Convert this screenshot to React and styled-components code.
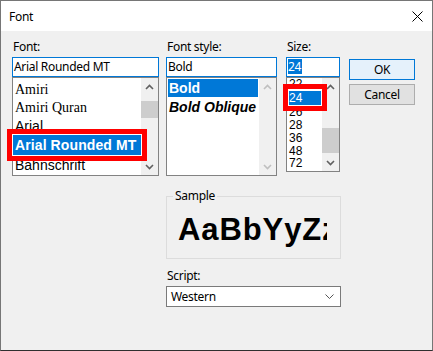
import React from 'react';
import styled, { createGlobalStyle } from 'styled-components';

const GlobalStyle = createGlobalStyle`
    html, body {
        margin: 0;
        padding: 0;
        background: #ffffff;
    }
    * {
        box-sizing: border-box;
    }
`;

const ui = `"Noto Sans", "Liberation Sans", sans-serif`;

const Dialog = styled.div`
    display: flex;
    flex-direction: column;
    width: 433px;
    height: 351px;
    border: 1px solid #767676;
    border-bottom-color: #2f2f2f;
    font-family: ${ui};
    font-size: 12px;
    letter-spacing: -0.3px;
    color: #000;
`;

const TitleBar = styled.div`
    display: flex;
    align-items: center;
    justify-content: space-between;
    height: 30px;
    padding: 0 9px 0 8px;
    background: #ffffff;
`;

const Title = styled.span`
    font-size: 12px;
    line-height: 14px;
    margin-top: 1px;
`;

const CloseIcon = () => (
    <svg width="11" height="11" viewBox="0 0 11 11">
        <path d="M0.5 0.5 L10.5 10.5 M10.5 0.5 L0.5 10.5" stroke="#000" strokeWidth="1" fill="none" />
    </svg>
);

const Body = styled.div`
    flex: 1;
    background: #f0f0f0;
    padding: 9px 0 0 11px;
    display: grid;
    grid-template-columns: 154px 120px 63px 66px;
    grid-template-rows: auto auto auto;
    align-content: start;
`;

const Column = styled.div`
    display: flex;
    flex-direction: column;
    align-items: flex-start;
`;

const Label = styled.label`
    display: block;
    line-height: 14px;
    height: 14px;
    margin: 0 0 3px 1px;
`;

const Input = styled.div`
    width: ${p => p.$w}px;
    height: 20px;
    border: 1px solid #0078d7;
    background: #fff;
    padding: 1px 0 0 1px;
    line-height: 16px;
    white-space: nowrap;
    overflow: hidden;
`;

const SelectedText = styled.span`
    background: #0078d7;
    color: #fff;
    display: inline-block;
    line-height: 15px;
    padding-right: 1px;
`;

const ListWrap = styled.div`
    position: relative;
`;

const List = styled.div`
    display: flex;
    width: ${p => p.$w}px;
    height: ${p => p.$h}px;
    border: 1px solid #828282;
    background: #fff;
    overflow: hidden;
`;

const Items = styled.div`
    flex: 1;
    min-width: 0;
    padding-top: ${p => p.$pad || 0}px;
    overflow: hidden;
`;

const Item = styled.div`
    height: ${p => p.$h}px;
    line-height: ${p => p.$h}px;
    padding-left: ${p => (p.$inset ? 1 : 2)}px;
    margin: 0 ${p => (p.$inset ? 1 : 0)}px;
    font-family: ${p => (p.$serif ? '"Liberation Serif", serif' : '"Liberation Sans", Arial, sans-serif')};
    font-size: ${p => p.$size || 14}px;
    font-weight: ${p => (p.$bold ? 700 : 400)};
    font-style: ${p => (p.$italic ? 'italic' : 'normal')};
    letter-spacing: ${p => p.$spacing || 0}px;
    white-space: nowrap;
    background: ${p => (p.$selected ? '#0078d7' : 'transparent')};
    color: ${p => (p.$selected ? '#fff' : '#000')};
`;

const ScrollBar = styled.div`
    display: flex;
    flex-direction: column;
    width: 17px;
    flex: none;
    background: #f0f0f0;
`;

const ArrowButton = styled.div`
    height: 17px;
    display: flex;
    align-items: center;
    justify-content: center;
    flex: none;
`;

const Track = styled.div`
    flex: 1;
`;

const Thumb = styled.div`
    margin-top: ${p => p.$top}px;
    height: ${p => p.$h}px;
    background: #cdcdcd;
`;

const Arrow = ({ up, disabled }) => (
    <svg width="9" height="6" viewBox="0 0 9 6">
        <path
            d={up ? 'M1 5 L4.5 1.5 L8 5' : 'M1 1 L4.5 4.5 L8 1'}
            stroke={disabled ? '#bfbfbf' : '#606060'}
            strokeWidth="1.6"
            fill="none"
        />
    </svg>
);

const Highlight = styled.div`
    position: absolute;
    left: ${p => p.$x}px;
    top: ${p => p.$y}px;
    width: ${p => p.$w}px;
    height: ${p => p.$h}px;
    border: 5px solid #ff0000;
    box-shadow: inset 0 0 0 1px #ffffff;
    pointer-events: none;
`;

const ButtonColumn = styled.div`
    display: flex;
    flex-direction: column;
    gap: 4px;
    padding-top: 19px;
`;

const Button = styled.button`
    width: 66px;
    height: 21px;
    padding: 0;
    font-family: ${ui};
    font-size: 12px;
    letter-spacing: -0.3px;
    color: #000;
    border: 1px solid ${p => (p.$default ? '#0078d7' : '#adadad')};
    background: ${p => (p.$default ? '#e5f1fb' : '#e1e1e1')};
`;

const SampleBox = styled.fieldset`
    grid-column: 2 / 4;
    width: 175px;
    height: 70px;
    margin: 13px 0 0 0;
    padding: 0 0 0 6px;
    min-width: 0;
    border: 1px solid #dcdcdc;
`;

const Legend = styled.legend`
    padding: 0 2px;
    line-height: 14px;
`;

const SampleText = styled.div`
    width: 149px;
    margin: 9px 0 0 5px;
    overflow: hidden;
    white-space: nowrap;
    font-family: "Liberation Sans", Arial, sans-serif;
    font-weight: 700;
    font-size: 31px;
    letter-spacing: 0.9px;
    line-height: 36px;
`;

const ScriptBlock = styled.div`
    grid-column: 2 / 4;
    margin-top: 10px;
`;

const Select = styled.div`
    display: flex;
    align-items: center;
    justify-content: space-between;
    width: 175px;
    height: 21px;
    border: 1px solid #7a7a7a;
    background: #fff;
    padding: 0 6px 0 4px;
    line-height: 16px;
`;

const SelectChevron = () => (
    <svg width="9" height="6" viewBox="0 0 9 6">
        <path d="M0.5 0.5 L4.5 4.5 L8.5 0.5" stroke="#555" strokeWidth="1" fill="none" />
    </svg>
);

const fonts = [
    { name: 'Amiri', h: 18, serif: true },
    { name: 'Amiri Quran', h: 18, serif: true },
    { name: 'Arial', h: 18 },
    { name: 'Arial Rounded MT', h: 20, bold: true, selected: true, spacing: 0.1 },
    { name: 'Bahnschrift', h: 20 },
];

const styles = [
    { name: 'Bold', h: 18, bold: true, selected: true },
    { name: 'Bold Oblique', h: 20, bold: true, italic: true },
];

const sizes = [
    { name: '22', h: 13 },
    { name: '24', h: 15, selected: true },
    { name: '26', h: 13 },
    { name: '28', h: 13 },
    { name: '36', h: 12.5 },
    { name: '48', h: 12.5 },
    { name: '72', h: 12.5 },
];

const App = () => (
    <>
        <GlobalStyle />
        <Dialog>
            <TitleBar>
                <Title>Font</Title>
                <CloseIcon />
            </TitleBar>

            <Body>
                <Column>
                    <Label>Font:</Label>
                    <Input $w={147}>Arial Rounded MT</Input>
                    <ListWrap>
                        <List $w={147} $h={99}>
                            <Items $pad={3}>
                                {fonts.map(f => (
                                    <Item
                                        key={f.name}
                                        $h={f.h}
                                        $serif={f.serif}
                                        $bold={f.bold}
                                        $selected={f.selected}
                                        $spacing={f.spacing}
                                    >
                                        {f.name}
                                    </Item>
                                ))}
                            </Items>
                            <ScrollBar>
                                <ArrowButton><Arrow up /></ArrowButton>
                                <Track><Thumb $top={6} $h={17} /></Track>
                                <ArrowButton><Arrow /></ArrowButton>
                            </ScrollBar>
                        </List>
                        <Highlight $x={-5} $y={52} $w={140} $h={32} />
                    </ListWrap>
                </Column>

                <Column>
                    <Label>Font style:</Label>
                    <Input $w={111}>Bold</Input>
                    <List $w={111} $h={99}>
                        <Items $pad={1}>
                            {styles.map(s => (
                                <Item
                                    key={s.name}
                                    $h={s.h}
                                    $inset
                                    $bold={s.bold}
                                    $italic={s.italic}
                                    $selected={s.selected}
                                >
                                    {s.name}
                                </Item>
                            ))}
                        </Items>
                        <ScrollBar>
                            <ArrowButton><Arrow up disabled /></ArrowButton>
                            <Track />
                            <ArrowButton><Arrow disabled /></ArrowButton>
                        </ScrollBar>
                    </List>
                </Column>

                <Column>
                    <Label>Size:</Label>
                    <Input $w={54}><SelectedText>24</SelectedText></Input>
                    <ListWrap>
                        <List $w={54} $h={95}>
                            <Items>
                                {sizes.map(s => (
                                    <Item
                                        key={s.name}
                                        $h={s.h}
                                        $size={12}
                                        $selected={s.selected}
                                    >
                                        {s.name}
                                    </Item>
                                ))}
                            </Items>
                            <ScrollBar>
                                <ArrowButton><Arrow up /></ArrowButton>
                                <Track><Thumb $top={33} $h={25} /></Track>
                                <ArrowButton><Arrow /></ArrowButton>
                            </ScrollBar>
                        </List>
                        <Highlight $x={-3} $y={7} $w={44} $h={27} />
                    </ListWrap>
                </Column>

                <ButtonColumn>
                    <Button $default>OK</Button>
                    <Button>Cancel</Button>
                </ButtonColumn>

                <SampleBox>
                    <Legend>Sample</Legend>
                    <SampleText>AaBbYyZz</SampleText>
                </SampleBox>

                <ScriptBlock>
                    <Label>Script:</Label>
                    <Select>
                        <span>Western</span>
                        <SelectChevron />
                    </Select>
                </ScriptBlock>
            </Body>
        </Dialog>
    </>
);

export default App;
